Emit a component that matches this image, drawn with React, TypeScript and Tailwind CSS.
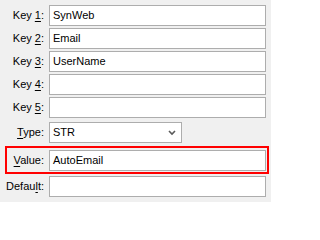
import type { ReactNode } from "react";

type RowProps = {
  label: ReactNode;
  children: ReactNode;
};

function Row({ label, children }: RowProps) {
  return (
    <div className="flex h-[21px] items-center">
      <label className="w-[37px] shrink-0 whitespace-nowrap text-right">{label}</label>
      <div className="ml-[5px] flex h-full flex-1">{children}</div>
    </div>
  );
}

function Field({ value = "" }: { value?: string }) {
  return (
    <div className="flex h-full flex-1 items-center border border-[#adadad] bg-white pl-[3px] text-black">
      {value}
    </div>
  );
}

function Key({ n }: { n: string }) {
  return (
    <>
      Key <u className="underline-offset-[2px]">{n}</u>:
    </>
  );
}

export default function App() {
  return (
    <div
      className="flex h-[202px] w-[271px] flex-col gap-[2px] bg-[#f0f0f0] pl-[7px] pr-[5px] pt-[5px] text-[11px] leading-none text-black"
      style={{ fontFamily: '"Liberation Sans", Arial, sans-serif' }}
    >
      <Row label={<Key n="1" />}>
        <Field value="SynWeb" />
      </Row>
      <Row label={<Key n="2" />}>
        <Field value="Email" />
      </Row>
      <Row label={<Key n="3" />}>
        <Field value="UserName" />
      </Row>
      <Row label={<Key n="4" />}>
        <Field />
      </Row>
      <Row label={<Key n="5" />}>
        <Field />
      </Row>
      <div className="mt-[2px]">
        <Row
          label={
            <>
              <u className="underline-offset-[2px]">T</u>ype:
            </>
          }
        >
          <div className="flex h-full w-[133px] items-center justify-between border border-[#adadad] bg-white pl-[3px] pr-[5px]">
            <span>STR</span>
            <svg width="8" height="6" viewBox="0 0 8 6" fill="none">
              <path d="M1 1 L4 4 L7 1" stroke="#5a5a5a" strokeWidth="1.6" />
            </svg>
          </div>
        </Row>
      </div>
      <div className="-ml-[2px] -mr-[3px] mt-[1px] flex h-[28px] flex-col border-2 border-[#ff0000] pb-[1px] pl-[0px] pr-[1px] pt-[2px]">
        <Row
          label={
            <>
              <u className="underline-offset-[2px]">V</u>alue:
            </>
          }
        >
          <Field value="AutoEmail" />
        </Row>
      </div>
      <Row
        label={
          <span className="-ml-[4px]">
            Defau<u className="underline-offset-[2px]">l</u>t:
          </span>
        }
      >
        <Field />
      </Row>
    </div>
  );
}
